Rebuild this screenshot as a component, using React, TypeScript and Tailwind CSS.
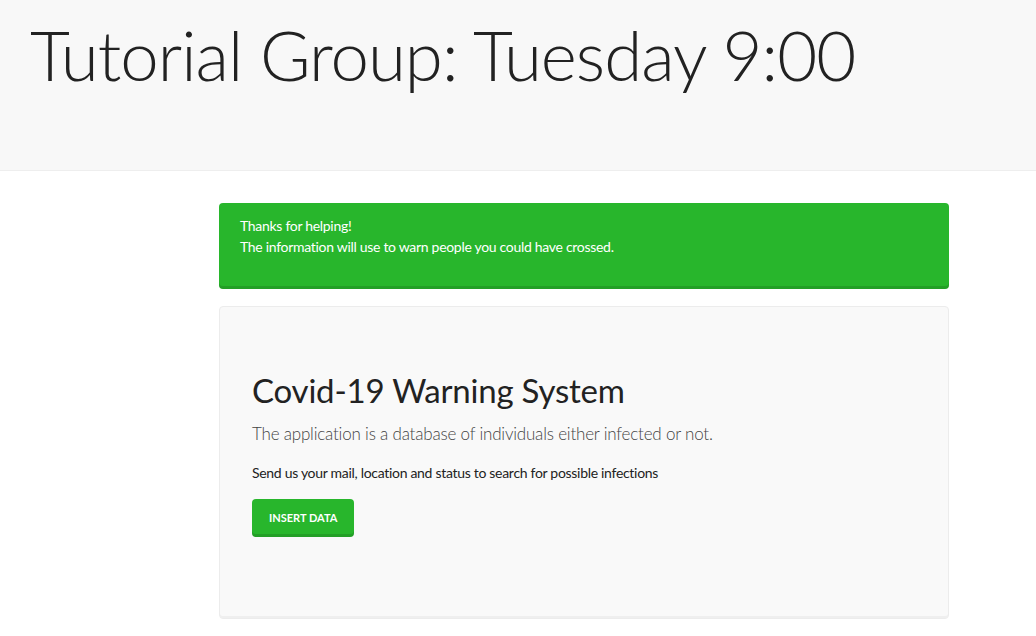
export default function App() {
  return (
    <div className="min-h-[636px] bg-white text-[#222] font-['Source_Sans_Pro','Lato','Noto_Sans',sans-serif]">
      <header className="h-[171px] bg-[#f8f8f8] border-b border-[#eeeeee] pl-[30px] pt-[14px]">
        <h1 className="text-[69px] font-light leading-[1.2] tracking-[-1px]">
          Tutorial Group: Tuesday 9:00
        </h1>
      </header>

      <main className="ml-[219px] w-[730px] pt-[32px]">
        <div className="rounded-[4px] bg-[#28b62c] text-white text-[14px] leading-[21px] tracking-[-0.3px] px-[21px] pt-[12px] pb-[16px] shadow-[inset_0_-3px_0_rgba(0,0,0,0.12)]">
          <p className="mb-[16px]">
            Thanks for helping!
            <br />
            The information will use to warn people you could have crossed.
          </p>
        </div>

        <section className="mt-[17px] h-[313px] rounded-[4px] border border-[#ececec] bg-[#f9f9f9] px-[32px] pt-[64px] shadow-[inset_0_-2px_0_rgba(0,0,0,0.04)]">
          <h2 className="text-[33px] leading-[1.2] font-normal tracking-[-0.2px] text-[#222]">
            Covid-19 Warning System
          </h2>
          <p className="mt-[10px] text-[17px] font-light leading-[1.5] tracking-[-0.2px] text-[#444]">
            The application is a database of individuals either infected or not.
          </p>
          <p className="mt-[16px] text-[14px] leading-[21px] tracking-[-0.3px]">
            Send us your mail, location and status to search for possible infections
          </p>
          <button className="mt-[16px] h-[38px] rounded-[4px] bg-[#28b62c] px-[17px] text-[11px] font-bold uppercase text-white shadow-[inset_0_-3px_0_rgba(0,0,0,0.12)]">
            Insert Data
          </button>
        </section>
      </main>
    </div>
  );
}
